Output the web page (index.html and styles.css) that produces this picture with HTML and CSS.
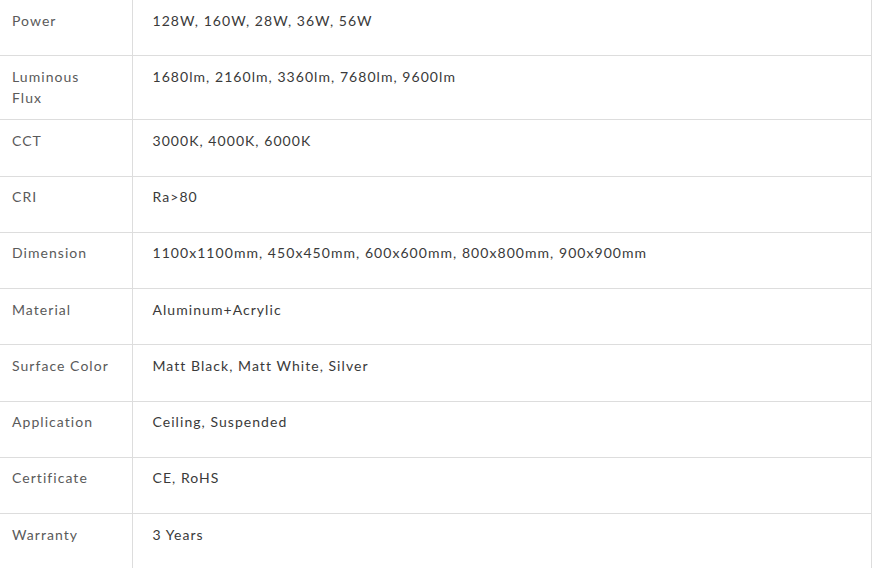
FILE: index.html
```html
<!DOCTYPE html>
<html>
<head>
<meta charset="utf-8">
<link rel="stylesheet" href="styles.css">
</head>
<body>
<table class="specs">
  <tr><th>Power</th><td>128W, 160W, 28W, 36W, 56W</td></tr>
  <tr><th>Luminous Flux</th><td>1680lm, 2160lm, 3360lm, 7680lm, 9600lm</td></tr>
  <tr><th>CCT</th><td>3000K, 4000K, 6000K</td></tr>
  <tr><th>CRI</th><td>Ra&gt;80</td></tr>
  <tr><th>Dimension</th><td>1100x1100mm, 450x450mm, 600x600mm, 800x800mm, 900x900mm</td></tr>
  <tr><th>Material</th><td>Aluminum+Acrylic</td></tr>
  <tr><th>Surface Color</th><td>Matt Black, Matt White, Silver</td></tr>
  <tr><th>Application</th><td>Ceiling, Suspended</td></tr>
  <tr><th>Certificate</th><td>CE, RoHS</td></tr>
  <tr><th>Warranty</th><td>3 Years</td></tr>
</table>
</body>
</html>
```
FILE: styles.css
```css
html, body {
  margin: 0;
  padding: 0;
  background: #fff;
}
body {
  font-family: Lato, "Liberation Sans", sans-serif;
  font-size: 14px;
  line-height: 21px;
  letter-spacing: 1.05px;
}
.specs {
  width: 872px;
  border-collapse: collapse;
  margin-top: -1px;
  table-layout: fixed;
}
.specs tr {
  height: 56.25px;
}
.specs th,
.specs td {
  border: 1px solid #ddd;
  vertical-align: top;
  text-align: left;
  font-weight: normal;
  padding: 9.5px 12px 11.5px;
}
.specs th {
  width: 100px;
  padding-right: 20px;
  color: #5a5a5a;
  border-left: none;
}
.specs td {
  color: #3a3a3a;
  padding-left: 19.5px;
}
```
